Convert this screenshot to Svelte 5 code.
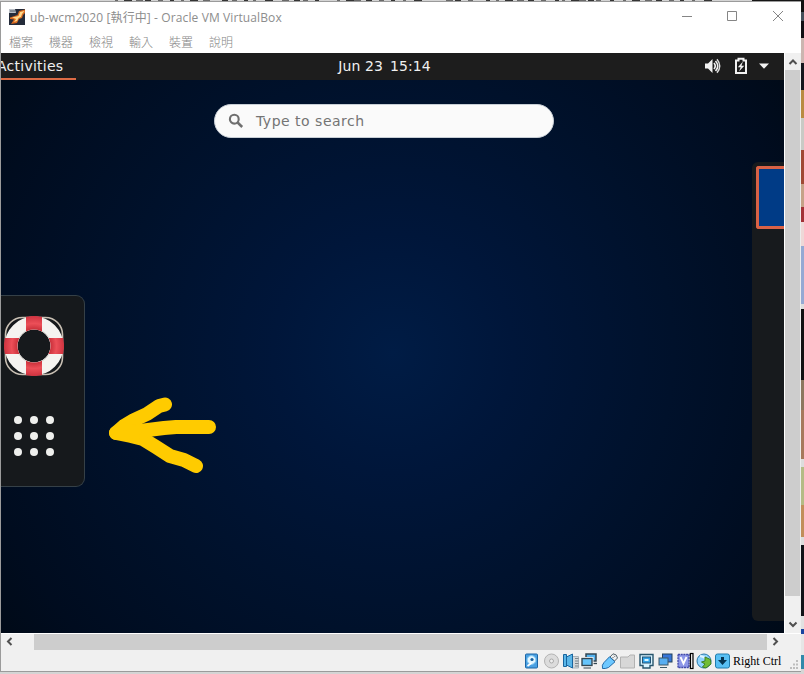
<script>
  const menus = ['檔案', '機器', '檢視', '輸入', '裝置', '說明'];
  const dots = [0, 1, 2, 3, 4, 5, 6, 7, 8];
  const fragments = [115, 124, 136, 145, 158, 170, 181, 190, 203, 222, 232, 244, 253, 265, 282, 294, 303, 315, 337, 346, 354, 366, 379, 391, 403, 414, 446, 455, 468, 486, 496, 505, 517, 528, 541, 555, 562, 571, 579, 588, 596, 610, 623, 632, 645, 656, 669, 680, 692, 704];
</script>

<div class="screen">
  <svg class="behind" width="804" height="2">
    {#each fragments as x, i}
      <rect {x} y="0" width={3 + (i * 5) % 6} height={i % 3 ? 1 : 2} fill="#222" opacity={i % 2 ? 0.9 : 0.6} />
    {/each}
    <rect x="752" y="0" width="52" height="1" fill="#151515" />
  </svg>
  <div class="window">
    <header class="title">
      <svg class="logo" width="16" height="16" viewBox="0 0 16 16">
        <rect width="16" height="16" fill="#242b3a" />
        <path d="M0 0H6L7 4H0Z" fill="#b9bec5" /><path d="M1 2H6" stroke="#555e6b" />
        <path d="M16 0.5L10 2L8.5 6L1 8.5V10L5 10.5L2 15L8 14L10 10L13 9L14 6L16 4Z" fill="#d96a20" />
        <path d="M15.5 2L11 3L9.5 7L3 8.5L7 10L5 13L8 12L9.5 9L12 8L13 5Z" fill="#ffd98a" />
      </svg>
      <span class="name">ub-wcm2020 [執行中] - Oracle VM VirtualBox</span>
      <svg class="controls" width="110" height="14" viewBox="0 0 110 14" fill="none" stroke="#858585">
        <path d="M1 6.5H11M46.5 1.5H55.5V10.5H46.5ZM92 1L102 11M102 1L92 11" />
      </svg>
    </header>
    <nav>{#each menus as m}<span>{m}</span>{/each}</nav>

    <div class="view">
      <main>
        <div class="topbar">
          <div class="activities"><span>Activities</span></div>
          <time>Jun 23&ensp;15:14</time>
          <svg class="tray" width="70" height="20" viewBox="0 0 70 20">
            <path d="M1 7.5H4L8.5 3V17L4 12.5H1Z" fill="#f2f2f2" />
            <path d="M10 7Q12.5 10 10 13M11.5 5Q16 10 11.5 15" fill="none" stroke="#f2f2f2" stroke-width="1.6" />
            <path d="M13 3.2Q18.5 10 13 16.8" fill="none" stroke="#ddd" stroke-width="1.4" />
            <path d="M32 4.5H34.5V2.8H39.5V4.5H42V17H32Z" fill="none" stroke="#f2f2f2" stroke-width="2" />
            <path d="M39 5.5L33.8 11.2H36.7L35 15.5L40.3 9.7H37.4Z" fill="#f2f2f2" />
            <path d="M55 7.5H65L60 12.7Z" fill="#f2f2f2" />
          </svg>
        </div>
        <div class="search">
          <svg width="16" height="16" viewBox="0 0 16 16" fill="none" stroke="#6f6f6f">
            <circle cx="6.3" cy="6.2" r="4.4" stroke-width="2.1" /><path d="M9.6 9.5L14.2 14" stroke-width="2.5" />
          </svg>
          <span>Type to search</span>
        </div>
        <div class="overview">
          <aside class="dash">
            <svg class="ring" width="60" height="60" viewBox="0 0 60 60">
              <defs>
                <radialGradient id="redband" gradientUnits="userSpaceOnUse" cx="30" cy="30" r="30"><stop offset=".55" stop-color="#c9303a" /><stop offset=".75" stop-color="#ec4f58" /><stop offset="1" stop-color="#cf3340" /></radialGradient>
                <clipPath id="bands"><path d="M22 0H38V60H22ZM0 22H60V38H0Z" /></clipPath>
              </defs>
              <rect x="1.5" y="1.5" width="57" height="57" rx="17" fill="none" stroke="#c9c0b4" stroke-width="1.6" />
              <circle cx="30" cy="30" r="22.9" fill="none" stroke="#f5f3f0" stroke-width="13" />
              <circle cx="30" cy="30" r="17" fill="none" stroke="#d8d5d0" stroke-width="1" />
              <g clip-path="url(#bands)"><circle cx="30" cy="30" r="23.3" fill="none" stroke="url(#redband)" stroke-width="13.5" /></g>
            </svg>
            <div class="apps">{#each dots as d}<i></i>{/each}</div>
          </aside>
          <svg class="arrow" width="112" height="80" viewBox="0 0 112 80" fill="none" stroke="#ffcb00" stroke-linecap="round" stroke-linejoin="round">
            <path d="M61 9.5L55 11L43 19L30 25L20 31L12 38L27 41L39 44L52 52L66 61L80 65L92 71" stroke-width="14" />
            <path d="M12 38L36 36L60 33L72 32H105" stroke-width="14" />
            <path d="M10 36L20 31L35 35L26 40L12 40Z" fill="#ffcb00" stroke-width="8" />
          </svg>
          <aside class="workspaces"><div class="thumb"></div></aside>
        </div>
      </main>
      <div class="vscroll">
        <svg width="16" height="17" viewBox="0 0 16 17" fill="none" stroke="#505050" stroke-width="2"><path d="M4.5 11L8 7.5L11.5 11" /></svg>
        <div class="vthumb"></div>
        <svg width="16" height="17" viewBox="0 0 16 17" fill="none" stroke="#505050" stroke-width="2"><path d="M4.5 6.5L8 10L11.5 6.5" /></svg>
      </div>
    </div>

    <div class="hscroll">
      <svg width="33" height="16" viewBox="0 0 33 16" fill="none" stroke="#505050" stroke-width="2"><path d="M10.5 4L7 7.5L10.5 11" /></svg>
      <div class="hthumb"></div>
      <svg width="17" height="16" viewBox="0 0 17 16" fill="none" stroke="#505050" stroke-width="2"><path d="M6.5 4L10 7.5L6.5 11" /></svg>
    </div>

    <footer>
      <svg class="devices" width="210" height="18" viewBox="0 0 210 18" fill="none">
        <rect x="1.5" y="2" width="12" height="14" rx="1" fill="#4aa0e2" stroke="#1c66a6" />
        <circle cx="7.5" cy="8" r="4.3" fill="#e4f6ff" stroke="#8fd0f4" /><circle cx="8" cy="7.5" r="1.6" fill="#17609f" />
        <path d="M3.5 14L7.5 11" stroke="#fff" stroke-width="1.6" />
        <circle cx="27.5" cy="9" r="7" fill="#dcdcdc" stroke="#b3b3b3" /><circle cx="27.5" cy="9" r="2" fill="#eee" stroke="#aaa" />
        <path d="M48.5 4.5H54.5V16H48.5" fill="#d2d7d9" stroke="#a9b2b8" /><path d="M51 6.5H54.5M51 9H54.5M51 11.5H54.5M51 14H54.5" stroke="#7d858a" />
        <path d="M39.5 2.5H42.5V5L48.5 2V16L42.5 13V14.5H39.5Z" fill="#5ab6e8" stroke="#19659e" /><path d="M42.5 5V13" stroke="#19659e" />
        <rect x="62" y="2" width="10" height="7" fill="#55b4f1" stroke="#344753" stroke-width="1.5" /><path d="M69 11.5H73" stroke="#344753" stroke-width="1.3" />
        <rect x="58" y="6.5" width="10" height="7" fill="#55b4f1" stroke="#fff" stroke-width="3" /><rect x="58" y="6.5" width="10" height="7" fill="#65c4fb" stroke="#344753" stroke-width="1.4" /><path d="M59.5 16H67" stroke="#344753" />
        <path d="M86 5L89 1.8Q93 2 93.5 6L90.5 9Z" fill="#eef1f3" stroke="#56636a" /><path d="M85.5 4.8L91 9.8L84.5 15.5Q81 17 78.5 16.5Q77.5 13 80 10.5Z" fill="#6dc8ff" stroke="#236caa" /><path d="M88.5 5L89.5 6M90 3.8L91 4.8" stroke="#666" />
        <path d="M96.5 5H104L106 3H110.5V16H96.5Z" fill="#d7d7d7" stroke="#b2b2b2" />
        <path d="M116 2.5H129V13.5H126V16H119V13.5H116Z" fill="#d9f3ff" stroke="#29556c" stroke-width="1.4" /><rect x="118.5" y="5" width="8" height="6" fill="#32a2e7" stroke="#245475" /><rect x="120.5" y="7" width="4" height="2" fill="#d9f5ff" />
        <rect x="138.5" y="2" width="9.5" height="8" fill="#3675d8" stroke="#25435d" /><rect x="135" y="6" width="9" height="7" fill="#57aef2" stroke="#3c5968" /><path d="M136 15.5H143" stroke="#3c5968" />
        <rect x="154" y="2.5" width="11" height="13" fill="#8d97e8" stroke="#4048a8" stroke-width="1.3" stroke-dasharray="2 .7" /><path d="M156.5 5L159.5 11.5L162.5 5" stroke="#fff" stroke-width="1.8" />
        <rect x="166.4" y="1.5" width="2.6" height="15" fill="#e8e8e8" stroke="#000" stroke-width="1.2" />
        <circle cx="180" cy="9" r="7" fill="#8fd4ff" stroke="#2879a9" /><path d="M176 4Q182 5 184 10" stroke="#e1f5ff" stroke-width="2" /><path d="M181 5L186.5 7.5L187 12L182 16L178.5 15L181 12L177.5 10L181 9Z" fill="#71bd36" stroke="#3d7f26" />
        <rect x="191.5" y="2" width="14" height="14" rx="2" fill="#58c0f4" stroke="#207cad" /><path d="M197 5H200V8H203L198.5 13L194 8H197Z" fill="#063653" />
      </svg>
      <span class="key">Right Ctrl</span>
      <svg class="grip" width="10" height="10" fill="#bdbdbd"><path d="M7 0h2v2H7zM4 3.5h2v2H4zM7 3.5h2v2H7zM1 7h2v2H1zM4 7h2v2H4zM7 7h2v2H7z" /></svg>
    </footer>
  </div>
</div>

<style>
  :global(body) { margin: 0; overflow: hidden; }
  .screen { width: 804px; height: 674px; box-sizing: border-box; padding: 1px 3px 2px 0; position: relative;
    background: linear-gradient(#101010 0 12px, #45505b 12px 21px, #101014 21px 38px, #cbb5b0 38px 63px, #14161d 63px 90px, #b98b42 90px 118px, #c9cac5 118px 150px, #9f4934 150px 184px, #c5a288 184px 207px, #a33137 207px 222px, #eed8d7 222px 246px, #94a9d3 246px 304px, #ddd 304px 309px, #111 309px 380px, #8b775e 380px 410px, #a6795c 410px 459px, #ddd 459px 467px, #b4bb85 467px 505px, #c18e5a 505px 537px, #ddd 537px 545px, #111318 545px 616px, #e1e1e1 616px 629px, #1744a0 629px 634px, #e6e6e6 634px 655px, #3189aa 655px 669px, #d6d6d6 669px) right / 4px 100% no-repeat, #d4d4d4; }
  .behind { position: absolute; left: 0; top: 0; }
  .window { width: 801px; height: 671px; box-sizing: border-box; background: #fff; border: 1px solid #9b9b9b; border-right: 0; position: relative; display: flex; flex-direction: column; font-family: "Open Sans", "Noto Sans CJK TC", sans-serif; }
  .title { height: 30px; display: flex; align-items: center; padding: 0 10px 1px 8px; box-sizing: border-box; color: #8d8d8d; }
  .logo { margin-right: 5px; }
  .name { font-size: 12px; letter-spacing: .11px; white-space: pre; flex: 1; }
  .controls { flex: none; }
  nav { height: 21px; display: flex; gap: 16px; padding-left: 8px; font: 300 12px/20px "Noto Sans CJK TC", sans-serif; color: #858585; }
  nav span { width: 24px; }
  .view { height: 580px; display: flex; }
  main { width: 783px; display: flex; flex-direction: column; overflow: hidden; font-family: "DejaVu Sans", sans-serif; background: radial-gradient(circle at 392px 300px, #001c45 0, #00163a 120px, #00112b 280px, #000c1f 420px, #000914 510px); }
  .topbar { height: 27px; flex: none; background: #1d1d1d; color: #f0f0f0; display: grid; grid-template-columns: 1fr auto 1fr; font-size: 14px; line-height: 26px; }
  .activities { width: 75px; height: 27px; box-sizing: border-box; border-bottom: 2px solid #dd6b45; }
  .activities span { margin-left: -4px; letter-spacing: .25px; }
  time { letter-spacing: .08px; transform: translateX(-8px); }
  .tray { justify-self: end; margin: 3px 10px 0 0; }
  .search { flex: none; width: 340px; height: 34px; box-sizing: border-box; margin: 24px 0 0 213px; border: 1px solid #c7ced5; border-radius: 17px; background: #fafafa; color: #747474; display: flex; align-items: center; padding-left: 13px; gap: 12px; font-size: 14px; letter-spacing: .5px; }
  .overview { flex: 1; display: flex; align-items: flex-start; }
  .dash { width: 84px; height: 192px; box-sizing: border-box; margin-top: 157px; background: #16191c; border: 1px solid #354047; border-left: 0; border-radius: 0 9px 9px 0; padding: 20px 0 0 3px; }
  .ring { display: block; }
  .apps { margin: 40px 0 0 10px; display: grid; grid-template-columns: repeat(3, 8px); gap: 8px; }
  .apps i { height: 8px; border-radius: 50%; background: #eeefed; }
  .arrow { margin: 257px 0 0 19px; }
  .workspaces { margin: 24px 0 0 auto; width: 32px; height: 459px; box-sizing: border-box; border-radius: 6px 0 0 6px; background: #171a1d; padding: 4px 0 0 4px; }
  .thumb { height: 63px; box-sizing: border-box; border: 3px solid #d96246; border-right: 0; border-radius: 3px 0 0 3px; background: #003b86; }
  .vscroll { width: 15px; margin-left: 1px; background: #f0f0f0; display: flex; flex-direction: column; align-items: center; border-right: 1px solid #ededed; }
  .vthumb { width: 15px; height: 527px; background: #cdcdcd; }
  .vscroll svg { flex: none; }
  .vscroll svg:last-child { margin-top: 20px; }
  .hscroll { height: 17px; display: flex; align-items: center; background: #f0f0f0; border-top: 1px solid #fff; box-sizing: border-box; }
  .hthumb { width: 733px; height: 16px; background: #cdcdcd; }
  footer { height: 21px; display: flex; background: #f0f0f0; align-items: center; }
  .devices { margin-left: 523px; flex: none; }
  .key { width: 52px; font: 12px/18px "Liberation Serif", serif; color: #000; white-space: nowrap; margin-left: -1px; }
  .grip { margin: 8px 0 0 4px; }
</style>
